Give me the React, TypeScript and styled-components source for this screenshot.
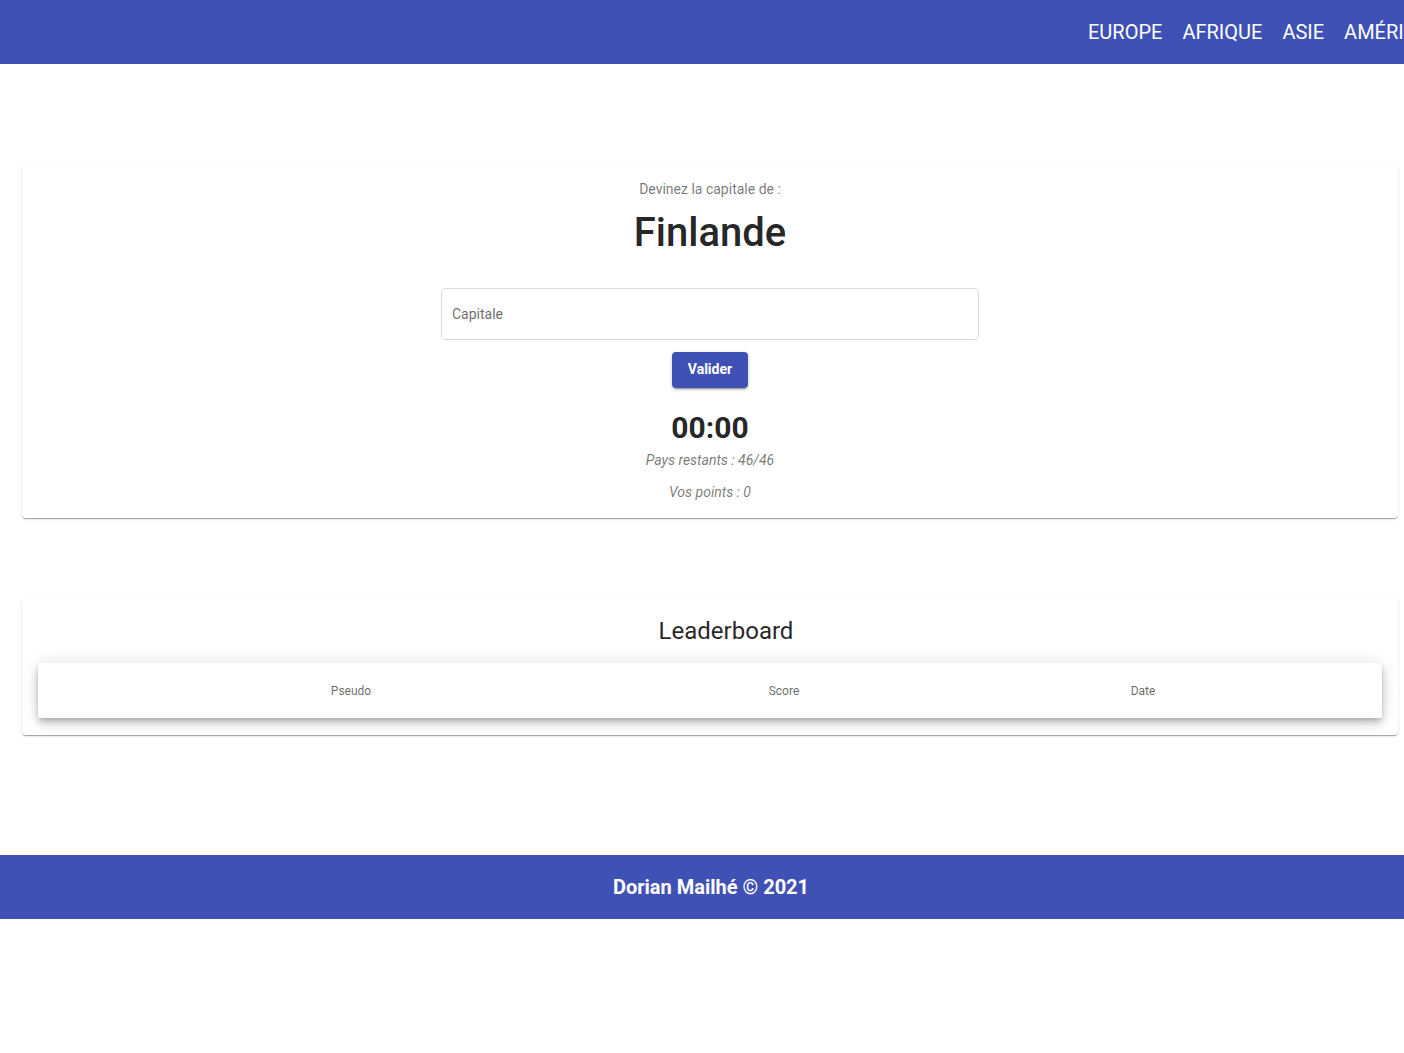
import React from "react";
import styled, { createGlobalStyle } from "styled-components";

const Global = createGlobalStyle`
  html, body { margin: 0; padding: 0; background: #fff; }
  body { font-family: Roboto, "Liberation Sans", Arial, sans-serif; color: rgba(0,0,0,0.87); }
  * { box-sizing: border-box; }
`;

const Page = styled.div`
  display: flex;
  flex-direction: column;
  width: 1404px;
  overflow: hidden;
`;

const Header = styled.header`
  height: 64px;
  background: #3f51b5;
  display: flex;
  align-items: center;
  overflow: hidden;
  white-space: nowrap;
`;

const Spacer = styled.div`
  width: 1078px;
  flex-shrink: 0;
`;

const Nav = styled.nav`
  display: flex;
  flex-shrink: 0;
`;

const NavItem = styled.a`
  color: #fff;
  font-size: 20px;
  line-height: 28px;
  padding: 0 10px;
  text-transform: uppercase;
  text-decoration: none;
  font-weight: 400;
`;

const Main = styled.main`
  display: flex;
  flex-direction: column;
  padding: 100px 6px 120px 22px;
  gap: 81px;
`;

const Card = styled.section<{ $bottom: number }>`
  background: #fff;
  border-radius: 4px;
  box-shadow: 0 2px 1px -1px rgba(0,0,0,0.2), 0 1px 1px 0 rgba(0,0,0,0.14), 0 1px 3px 0 rgba(0,0,0,0.12);
  display: flex;
  flex-direction: column;
  align-items: center;
  padding: 15px 16px ${(p) => p.$bottom}px;
`;

const Prompt = styled.div`
  font-size: 14px;
  line-height: 20px;
  color: rgba(0,0,0,0.54);
`;

const Country = styled.h1`
  margin: 10px 0 0;
  font-size: 40px;
  line-height: 48px;
  font-weight: 500;
  color: rgba(0,0,0,0.87);
`;

const Input = styled.input`
  margin-top: 31px;
  width: 538px;
  height: 52px;
  border: 1px solid #dcdcdc;
  border-radius: 4px;
  padding: 0 10px;
  font-family: inherit;
  font-size: 14px;
  color: rgba(0,0,0,0.87);
  outline: none;
  &::placeholder { color: rgba(0,0,0,0.6); }
`;

const Button = styled.button`
  margin-top: 12px;
  width: 76px;
  height: 36px;
  border: none;
  border-radius: 4px;
  background: #3f51b5;
  color: #fff;
  font-family: inherit;
  font-size: 14px;
  font-weight: 700;
  padding: 0 0 2px;
  box-shadow: 0 3px 1px -2px rgba(0,0,0,0.2), 0 2px 2px 0 rgba(0,0,0,0.14), 0 1px 5px 0 rgba(0,0,0,0.12);
  cursor: pointer;
`;

const Timer = styled.div`
  margin-top: 22px;
  font-size: 30px;
  line-height: 36px;
  font-weight: 700;
  color: rgba(0,0,0,0.87);
`;

const Stat = styled.div<{ $gap: number }>`
  margin-top: ${(p) => p.$gap}px;
  font-size: 14px;
  line-height: 20px;
  font-style: italic;
  color: rgba(0,0,0,0.54);
`;

const BoardTitle = styled.h2`
  margin: 0;
  padding: 1px 0 0 32px;
  font-size: 24px;
  line-height: 32px;
  font-weight: 400;
  color: rgba(0,0,0,0.87);
`;

const Table = styled.div`
  margin-top: 16px;
  align-self: stretch;
  background: #fff;
  border-radius: 2px;
  box-shadow: 0 3px 5px -1px rgba(0,0,0,0.2), 0 6px 10px 0 rgba(0,0,0,0.14), 0 1px 18px 0 rgba(0,0,0,0.12);
  display: grid;
  grid-template-columns: 626px 240px 1fr;
  height: 55px;
  align-items: center;
`;

const HeadCell = styled.div`
  text-align: center;
  font-size: 12px;
  color: rgba(0,0,0,0.6);
`;

const Footer = styled.footer`
  height: 64px;
  background: #3f51b5;
  display: flex;
  align-items: center;
  justify-content: center;
  padding-left: 18px;
  color: #fff;
  font-size: 20px;
  font-weight: 700;
`;

const regions = ["Europe", "Afrique", "Asie", "Amériques", "Océanie"];

export default function App() {
  return (
    <Page>
      <Global />
      <Header>
        <Spacer />
        <Nav>
          {regions.map((r) => (
            <NavItem key={r} href="#">{r}</NavItem>
          ))}
        </Nav>
      </Header>
      <Main>
        <Card $bottom={16}>
          <Prompt>Devinez la capitale de :</Prompt>
          <Country>Finlande</Country>
          <Input placeholder="Capitale" />
          <Button>Valider</Button>
          <Timer>00:00</Timer>
          <Stat $gap={4}>Pays restants : 46/46</Stat>
          <Stat $gap={12}>Vos points : 0</Stat>
        </Card>
        <Card $bottom={17}>
          <BoardTitle>Leaderboard</BoardTitle>
          <Table>
            <HeadCell>Pseudo</HeadCell>
            <HeadCell>Score</HeadCell>
            <HeadCell>Date</HeadCell>
          </Table>
        </Card>
      </Main>
      <Footer>Dorian Mailhé © 2021</Footer>
    </Page>
  );
}
